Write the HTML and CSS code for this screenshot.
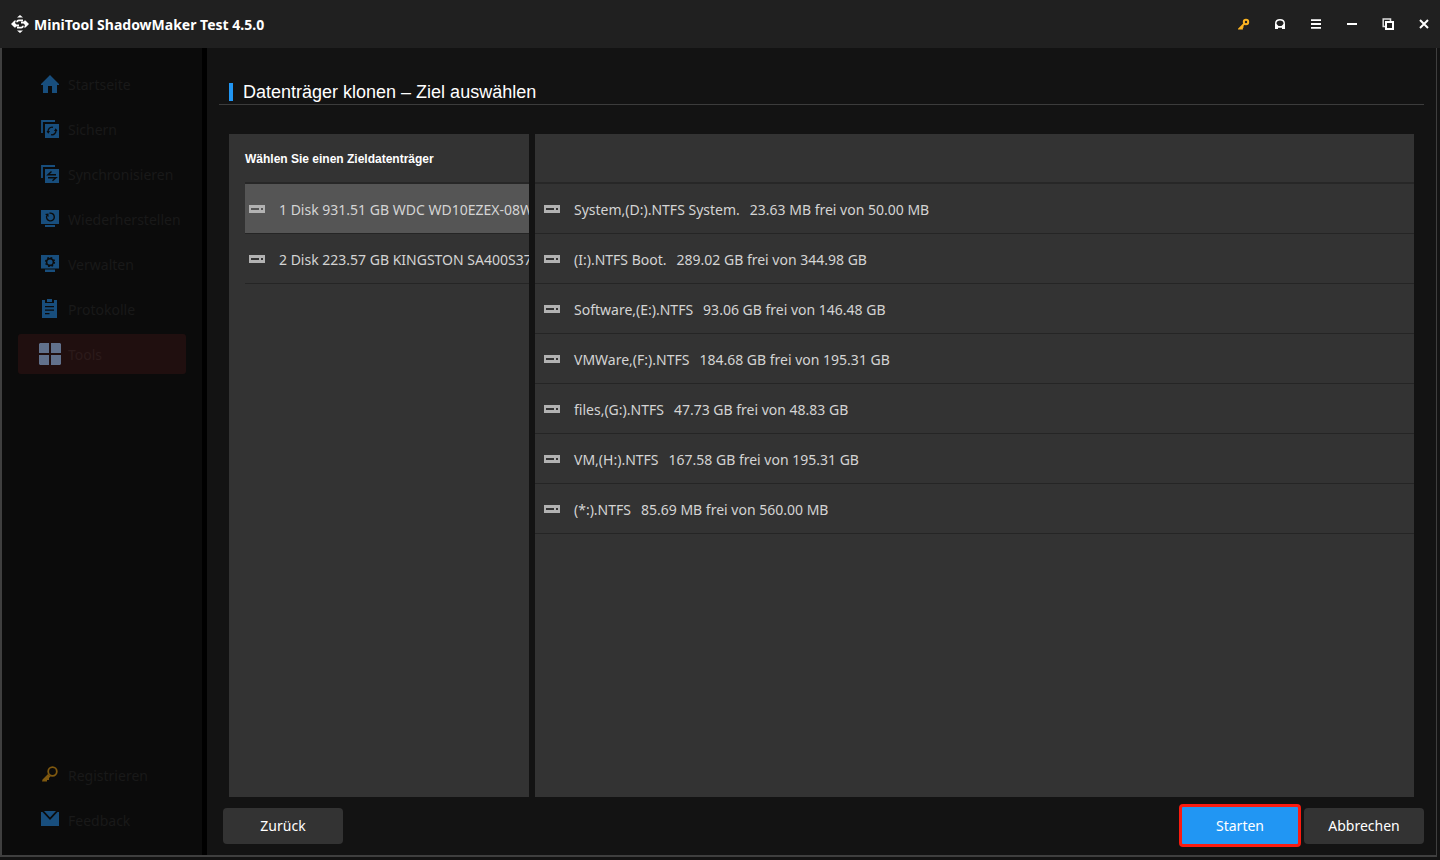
FILE: index.html
```html
<!DOCTYPE html>
<html lang="de">
<head>
<meta charset="utf-8">
<title>MiniTool ShadowMaker Test 4.5.0</title>
<link rel="stylesheet" href="styles.css">
</head>
<body>
<svg class="sprite" aria-hidden="true">
  <symbol id="disk" viewBox="0 0 16 8"><path fill="#b2b2b2" fill-rule="evenodd" d="M0 0H16V8H0ZM2 3V5H10V3ZM12 3V5H14V3Z"/></symbol>
</svg>
<div class="app">
  <header class="titlebar">
    <svg class="logo" viewBox="0 0 18 18" width="18" height="18" aria-hidden="true">
      <path fill="#fff" d="M6 2.500L9 0l3 2.500ZM6 15.500L9 18l3-2.500Z"/>
      <path fill="#fff" d="M0 9L3.500 5.500H5L4 8L5.500 9.500H8V11.500H5L4.500 12.500H3.500ZM18 9L14.500 12.500H13L14 10L12.500 8.500H10V6.500H13L13.500 5.500H14.500Z"/>
      <path fill="none" stroke="#fff" stroke-width="1.700" d="M12 5.300H8Q6 5.500 6 7.200M6 12.700H10Q12 12.500 12 10.800"/>
    </svg>
    <h1 class="app-title">MiniTool ShadowMaker Test 4.5.0</h1>
    <div class="window-tools">
      <button class="tool" type="button" aria-label="Registrieren"><svg width="12" height="12" viewBox="0 0 12 12"><circle cx="8" cy="4" r="2.200" fill="none" stroke="#fbb321" stroke-width="2"/><path d="M6.500 5.500L1.500 10.500H4V8.800H5.500" fill="none" stroke="#fbb321" stroke-width="1.800"/></svg></button>
      <button class="tool" type="button" aria-label="Support"><svg width="12" height="12" viewBox="0 0 12 12"><path d="M1.800 8V5Q2 1.700 6 1.700T10.200 5V8" fill="none" stroke="#fff" stroke-width="1.500"/><path d="M1 6H2.500L4.500 8H7.500L9.500 6H11V11H8V9.800H4V11H1Z" fill="#fff"/></svg></button>
      <button class="tool" type="button" aria-label="Menü"><svg width="12" height="12" viewBox="0 0 12 12"><path d="M1 1.300H11V3H1ZM1 5H11V7H1ZM1 9H11V10.700H1Z" fill="#fff"/></svg></button>
      <button class="tool" type="button" aria-label="Minimieren"><svg width="12" height="12" viewBox="0 0 12 12"><path d="M1 5H11V7H1Z" fill="#fff"/></svg></button>
      <button class="tool" type="button" aria-label="Wiederherstellen"><svg width="12" height="12" viewBox="0 0 12 12"><path d="M3 8.500H1.200V1H8.500V3" fill="none" stroke="#ddd" stroke-width="1.500"/><path d="M4 4H11V11H4Z" fill="none" stroke="#fff" stroke-width="2"/></svg></button>
      <button class="tool" type="button" aria-label="Schließen"><svg width="12" height="12" viewBox="0 0 12 12"><path d="M2 2L10 10M10 2L2 10" stroke="#fff" stroke-width="2"/></svg></button>
    </div>
  </header>
  <div class="workspace">
    <aside class="sidebar">
      <nav class="nav">
        <a class="nav-item" href="#start"><svg class="nav-icon" viewBox="0 0 20 20"><path fill="#184e7d" d="M10 1L19 10V11H17V19H12V12H8V19H3V11H1V10Z"/></svg><span>Startseite</span></a>
        <a class="nav-item" href="#backup"><svg class="nav-icon" viewBox="0 0 20 20"><path fill="none" stroke="#184e7d" stroke-width="1.800" d="M2 14V2H15"/><path fill="#184e7d" d="M5 5H19V19H5Z"/><path fill="none" stroke="#0b0b0b" stroke-width="1.300" d="M8.300 13.500A4 4 0 0 1 13 8.300M15.700 10.500A4 4 0 0 1 11 15.700"/><path fill="#0b0b0b" d="M6.500 12H10L8.300 14.800ZM14 12H17.500L15.700 9.200Z"/></svg><span>Sichern</span></a>
        <a class="nav-item" href="#sync"><svg class="nav-icon" viewBox="0 0 20 20"><path fill="none" stroke="#184e7d" stroke-width="1.800" d="M2 14V2H15"/><path fill="#184e7d" d="M5 5H19V19H5Z"/><path fill="none" stroke="#0b0b0b" stroke-width="1.400" d="M16 10.700H8L11.500 7.500M8 13.700H16L12.500 16.800"/></svg><span>Synchronisieren</span></a>
        <a class="nav-item" href="#restore"><svg class="nav-icon" viewBox="0 0 20 20"><path fill="#184e7d" d="M1 1H19V15H1ZM5 16H15V18H5Z"/><path fill="none" stroke="#0b0b0b" stroke-width="1.400" d="M9.500 4.200A3.900 3.900 0 1 1 6.800 6.500"/><path fill="#0b0b0b" d="M5 5L8.500 4.500L8.500 8Z"/></svg><span>Wiederherstellen</span></a>
        <a class="nav-item" href="#manage"><svg class="nav-icon" viewBox="0 0 20 20"><path fill="#184e7d" d="M1 1H19V14.500H1ZM5 15.500H15V18H5Z"/><circle cx="10" cy="8" r="3.400" fill="none" stroke="#0b0b0b" stroke-width="1.600"/><circle cx="10" cy="8" r="4.500" fill="none" stroke="#0b0b0b" stroke-width="1.200" stroke-dasharray="1.770"/></svg><span>Verwalten</span></a>
        <a class="nav-item" href="#logs"><svg class="nav-icon" viewBox="0 0 20 20"><path fill="#184e7d" d="M2 1H5V4H14V1H17V19H2ZM7 0H12V3H7Z"/><path fill="#0b0b0b" d="M5 7H14V8.200H5ZM5 10.500H14V11.700H5ZM5 14H9.500V15.200H5Z"/></svg><span>Protokolle</span></a>
        <a class="nav-item active" href="#tools" aria-current="page"><svg class="nav-icon large" viewBox="0 0 22 22"><path fill="#61718c" d="M1 0H10V10H0V1ZM12 0H21L22 1V10H12ZM0 12H10V22H1L0 21ZM12 12H22V21L21 22H12Z"/></svg><span>Tools</span></a>
      </nav>
      <nav class="nav">
        <a class="nav-item" href="#register"><svg class="nav-icon" viewBox="0 0 20 20"><circle cx="12.500" cy="6.500" r="4.300" fill="none" stroke="#80590f" stroke-width="1.800"/><path fill="#80590f" d="M8 9L10.500 11.500L9 13V15H7V16.500H2L2.500 14.500Z"/></svg><span>Registrieren</span></a>
        <a class="nav-item" href="#feedback"><svg class="nav-icon" viewBox="0 0 20 20"><path fill="#184e7d" d="M4 1H16L10 7.500ZM1 2H2.500L10 10L17.500 2H19V16H1Z"/></svg><span>Feedback</span></a>
      </nav>
    </aside>
    <main class="main">
      <div class="heading"><h2>Datenträger klonen – Ziel auswählen</h2></div>
      <div class="panels">
        <section class="panel disks">
          <h3 class="panel-head">Wählen Sie einen Zieldatenträger</h3>
          <ul class="list">
            <li><button class="row selected" type="button" aria-pressed="true"><svg class="disk"><use href="#disk"/></svg>1 Disk 931.51 GB WDC WD10EZEX-08W</button></li>
            <li><button class="row" type="button" aria-pressed="false"><svg class="disk"><use href="#disk"/></svg>2 Disk 223.57 GB KINGSTON SA400S37</button></li>
          </ul>
        </section>
        <section class="panel volumes" aria-label="Partitionen">
          <div class="panel-head"></div>
          <ul class="list">
            <li class="row"><svg class="disk"><use href="#disk"/></svg><span>System,(D:).NTFS System.</span><span class="size">23.63 MB frei von 50.00 MB</span></li>
            <li class="row"><svg class="disk"><use href="#disk"/></svg><span>(I:).NTFS Boot.</span><span class="size">289.02 GB frei von 344.98 GB</span></li>
            <li class="row"><svg class="disk"><use href="#disk"/></svg><span>Software,(E:).NTFS</span><span class="size">93.06 GB frei von 146.48 GB</span></li>
            <li class="row"><svg class="disk"><use href="#disk"/></svg><span>VMWare,(F:).NTFS</span><span class="size">184.68 GB frei von 195.31 GB</span></li>
            <li class="row"><svg class="disk"><use href="#disk"/></svg><span>files,(G:).NTFS</span><span class="size">47.73 GB frei von 48.83 GB</span></li>
            <li class="row"><svg class="disk"><use href="#disk"/></svg><span>VM,(H:).NTFS</span><span class="size">167.58 GB frei von 195.31 GB</span></li>
            <li class="row"><svg class="disk"><use href="#disk"/></svg><span>(*:).NTFS</span><span class="size">85.69 MB frei von 560.00 MB</span></li>
          </ul>
        </section>
      </div>
      <footer class="actions">
        <button class="btn back" type="button">Zurück</button>
        <button class="btn primary" type="button">Starten</button>
        <button class="btn" type="button">Abbrechen</button>
      </footer>
    </main>
  </div>
</div>
</body>
</html>
```
FILE: styles.css
```css
* { box-sizing: border-box; }
body {
  margin: 0;
  background: #131313;
  color: #fff;
  font: 14px/20px "Noto Sans", "Open Sans", sans-serif;
}
h1, h2, h3, ul { margin: 0; padding: 0; }
ul { list-style: none; }
button { font: inherit; color: inherit; border: 0; background: none; padding: 0; }
.sprite { display: none; }

.app { display: flex; flex-direction: column; height: 100vh; padding-bottom: 3px; }
.titlebar {
  display: flex;
  align-items: center;
  gap: 5px;
  height: 48px;
  flex: none;
  padding: 0 4px 0 11px;
  background: #202020;
}
.app-title { padding-top: 2px; font-size: 14px; font-weight: 700; }
.window-tools { display: flex; margin-left: auto; gap: 12px; }
.tool { display: flex; align-items: center; justify-content: center; width: 24px; height: 24px; }

.workspace {
  display: flex;
  flex: 1;
  min-height: 0;
  margin-right: 3px;
  border: solid #3f3f3f;
  border-width: 0 1px 2px 2px;
}
.sidebar {
  display: flex;
  flex-direction: column;
  justify-content: space-between;
  width: 205px;
  flex: none;
  padding: 16px 16px 15px;
  background: #0b0b0b;
  border-right: 5px solid #000;
}
.nav { display: flex; flex-direction: column; gap: 5px; }
.nav-item {
  display: flex;
  align-items: center;
  gap: 8px;
  height: 40px;
  padding-left: 22px;
  border-radius: 3px;
  color: #191919;
  text-decoration: none;
}
.nav-item span { padding-top: 2px; }
.nav-icon { width: 20px; height: 20px; flex: none; }
.nav-icon.large { width: 22px; height: 22px; margin: 0 -1px; }
.nav-item.active { background: #200f0f; color: #2c1b1b; }

.main { display: flex; flex-direction: column; flex: 1; min-width: 0; padding: 35px 12px 8px; }
.heading { border-bottom: 1px solid #3c3c3c; padding: 0 10px 3px; }
.heading h2 {
  border-left: 4px solid #2196f3;
  padding-left: 10px;
  font: 400 18px/18px "Liberation Sans", Arial, sans-serif;
}
.panels { display: flex; flex: 1; min-height: 0; gap: 6px; padding: 29px 10px 0; }
.panel { background: #333; overflow: hidden; color: #d4d4d4; }
.disks { width: 300px; flex: none; padding-left: 16px; }
.volumes { flex: 1; min-width: 0; }
.panel-head {
  height: 50px;
  border-bottom: 2px solid #272727;
  color: #fff;
  font: 700 12px/50px "Liberation Sans", Arial, sans-serif;
}
.row {
  display: flex;
  align-items: center;
  width: 100%;
  height: 50px;
  border-bottom: 1px solid #252525;
  padding: 2px 0 0 9px;
  white-space: nowrap;
  text-align: left;
}
.disks .row { padding-left: 4px; }
.row.selected { background: #555; }
.disk { width: 16px; height: 8px; flex: none; margin: 0 14px 2px 0; }
.size { margin-left: 10px; }

.actions { display: flex; align-items: center; gap: 3px; padding: 7px 0 0 4px; }
.btn { width: 120px; height: 36px; border-radius: 4px; background: #333; }
.back { margin-right: auto; }
.primary { width: 122px; height: 43px; border: 3px solid #fb1b10; background: #2196f3; }
```
